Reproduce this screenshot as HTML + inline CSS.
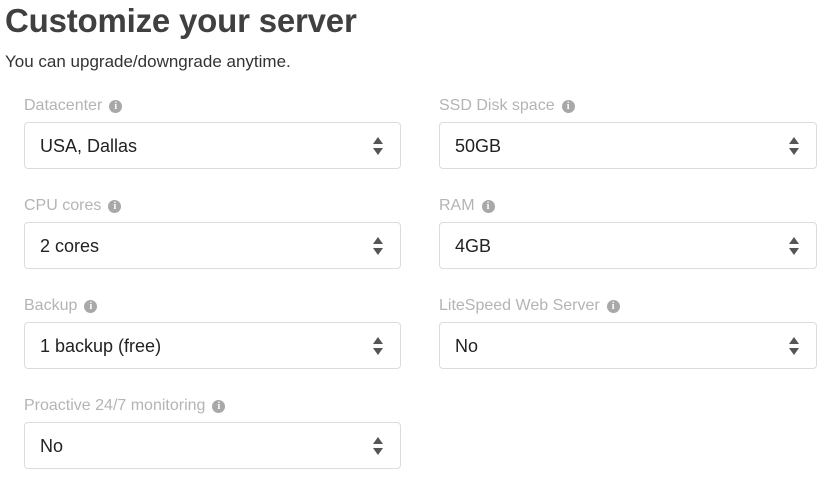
<!DOCTYPE html>
<html><head><style>
body{margin:0;width:829px;height:477px;background:#fff;font-family:"Liberation Sans",sans-serif;position:relative;overflow:hidden}
h1{position:absolute;left:5px;top:2px;margin:0;font-size:33px;font-weight:bold;color:#404040;letter-spacing:-0.2px}
.sub{position:absolute;left:5px;top:52px;font-size:17px;color:#333}
.lab{position:absolute;font-size:16px;color:#b4b4b4;height:20px;line-height:20px}
.lab i{display:inline-block;width:13px;height:13px;border-radius:50%;background:#a8a8a8;color:#fff;font-style:normal;font-size:10px;font-weight:bold;text-align:center;line-height:13px;margin-left:7px;vertical-align:1px;font-family:"Liberation Serif",serif}
.box{position:absolute;height:47px;border:1px solid #dcdcdc;border-radius:4px;box-sizing:border-box;font-size:18px;color:#222;line-height:47px;padding-left:15px}
.box svg{position:absolute;right:17px;top:14px}
</style></head><body>
<h1>Customize your server</h1>
<div class="sub">You can upgrade/downgrade anytime.</div>

<div class="lab" style="left:24px;top:96px">Datacenter<i>i</i></div>
<div class="box" style="left:24px;top:122px;width:377px">USA, Dallas<svg width="10" height="18"><path d="M5 0L10 7H0Z M5 18L10 11H0Z" fill="#555"/></svg></div>
<div class="lab" style="left:439px;top:96px">SSD Disk space<i>i</i></div>
<div class="box" style="left:439px;top:122px;width:378px">50GB<svg width="10" height="18"><path d="M5 0L10 7H0Z M5 18L10 11H0Z" fill="#555"/></svg></div>

<div class="lab" style="left:24px;top:196px">CPU cores<i>i</i></div>
<div class="box" style="left:24px;top:222px;width:377px">2 cores<svg width="10" height="18"><path d="M5 0L10 7H0Z M5 18L10 11H0Z" fill="#555"/></svg></div>
<div class="lab" style="left:439px;top:196px">RAM<i>i</i></div>
<div class="box" style="left:439px;top:222px;width:378px">4GB<svg width="10" height="18"><path d="M5 0L10 7H0Z M5 18L10 11H0Z" fill="#555"/></svg></div>

<div class="lab" style="left:24px;top:296px">Backup<i>i</i></div>
<div class="box" style="left:24px;top:322px;width:377px">1 backup (free)<svg width="10" height="18"><path d="M5 0L10 7H0Z M5 18L10 11H0Z" fill="#555"/></svg></div>
<div class="lab" style="left:439px;top:296px">LiteSpeed Web Server<i>i</i></div>
<div class="box" style="left:439px;top:322px;width:378px">No<svg width="10" height="18"><path d="M5 0L10 7H0Z M5 18L10 11H0Z" fill="#555"/></svg></div>

<div class="lab" style="left:24px;top:396px">Proactive 24/7 monitoring<i>i</i></div>
<div class="box" style="left:24px;top:422px;width:377px">No<svg width="10" height="18"><path d="M5 0L10 7H0Z M5 18L10 11H0Z" fill="#555"/></svg></div>
</body></html>
